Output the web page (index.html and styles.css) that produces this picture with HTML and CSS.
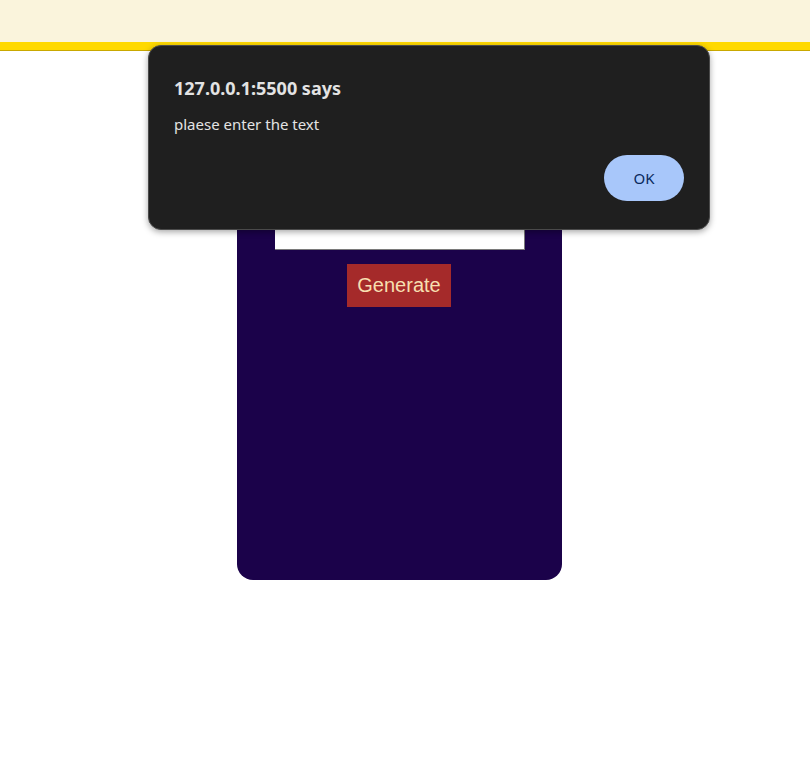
FILE: index.html
```html
<!DOCTYPE html>
<html lang="en">
<head>
<meta charset="utf-8">
<title>QR Generator</title>
<link rel="stylesheet" href="styles.css">
</head>
<body>
<header class="topbar"></header>
<main class="stage">
  <section class="card">
    <div class="card-body">
      <input class="text-input" type="text">
      <button class="gen-btn" type="button">Generate</button>
    </div>
  </section>
</main>
<div class="dialog" role="alertdialog">
  <h2 class="dialog-title">127.0.0.1:5500 says</h2>
  <p class="dialog-msg">plaese enter the text</p>
  <div class="dialog-actions">
    <button class="ok-btn" type="button">OK</button>
  </div>
</div>
</body>
</html>
```
FILE: styles.css
```css
html, body {
  margin: 0;
  padding: 0;
  background: #ffffff;
}
body {
  font-family: "Liberation Sans", Arial, sans-serif;
  width: 810px;
  height: 772px;
  overflow: hidden;
  position: relative;
}
.topbar {
  height: 42px;
  background: #faf4dc;
  border-bottom: 8px solid #ffd900;
  box-shadow: 0 1px 0 #c9a800;
}
.stage {
  display: flex;
  justify-content: center;
  padding-right: 11px;
  padding-top: 12px;
}
.card {
  width: 325px;
  height: 518px;
  background: #1b024a;
  border-radius: 16px;
  box-sizing: border-box;
  padding: 158px 37px 0 38px;
}
.card-body {
  display: flex;
  flex-direction: column;
  align-items: center;
  gap: 14px;
}
.text-input {
  width: 250px;
  height: 30px;
  box-sizing: border-box;
  border: none;
  border-right: 1px solid #7a7a7a;
  border-bottom: 1px solid #7a7a7a;
  background: #ffffff;
  margin: 0;
  padding: 0;
}
.gen-btn {
  width: 104px;
  height: 43px;
  background: #a52a2a;
  color: #f7dfb0;
  border: none;
  font-family: "Liberation Sans", Arial, sans-serif;
  font-size: 20px;
  padding: 0;
  margin: 0 0 0 -2px;
}
.dialog {
  position: absolute;
  left: 148px;
  top: 45px;
  width: 562px;
  height: 185px;
  box-sizing: border-box;
  background: #1f1f1f;
  border: 1px solid #4a4a4a;
  border-radius: 13px;
  box-shadow: 0 2px 6px rgba(0,0,0,0.35);
  padding: 30px 25px 0 25px;
  font-family: "Noto Sans", "Open Sans", sans-serif;
  color: #e3e3e3;
}
.dialog-title {
  margin: 0;
  font-size: 18px;
  font-weight: 700;
  line-height: 24px;
}
.dialog-msg {
  margin: 14px 0 0 0;
  font-size: 15px;
  line-height: 20px;
}
.dialog-actions {
  display: flex;
  justify-content: flex-end;
  margin-top: 21px;
}
.ok-btn {
  width: 80px;
  height: 46px;
  border-radius: 23px;
  border: none;
  background: #a8c7fa;
  color: #0a2a5e;
  font-family: "Noto Sans", "Open Sans", sans-serif;
  font-size: 15px;
  font-weight: 400;
  padding: 0;
}
```
